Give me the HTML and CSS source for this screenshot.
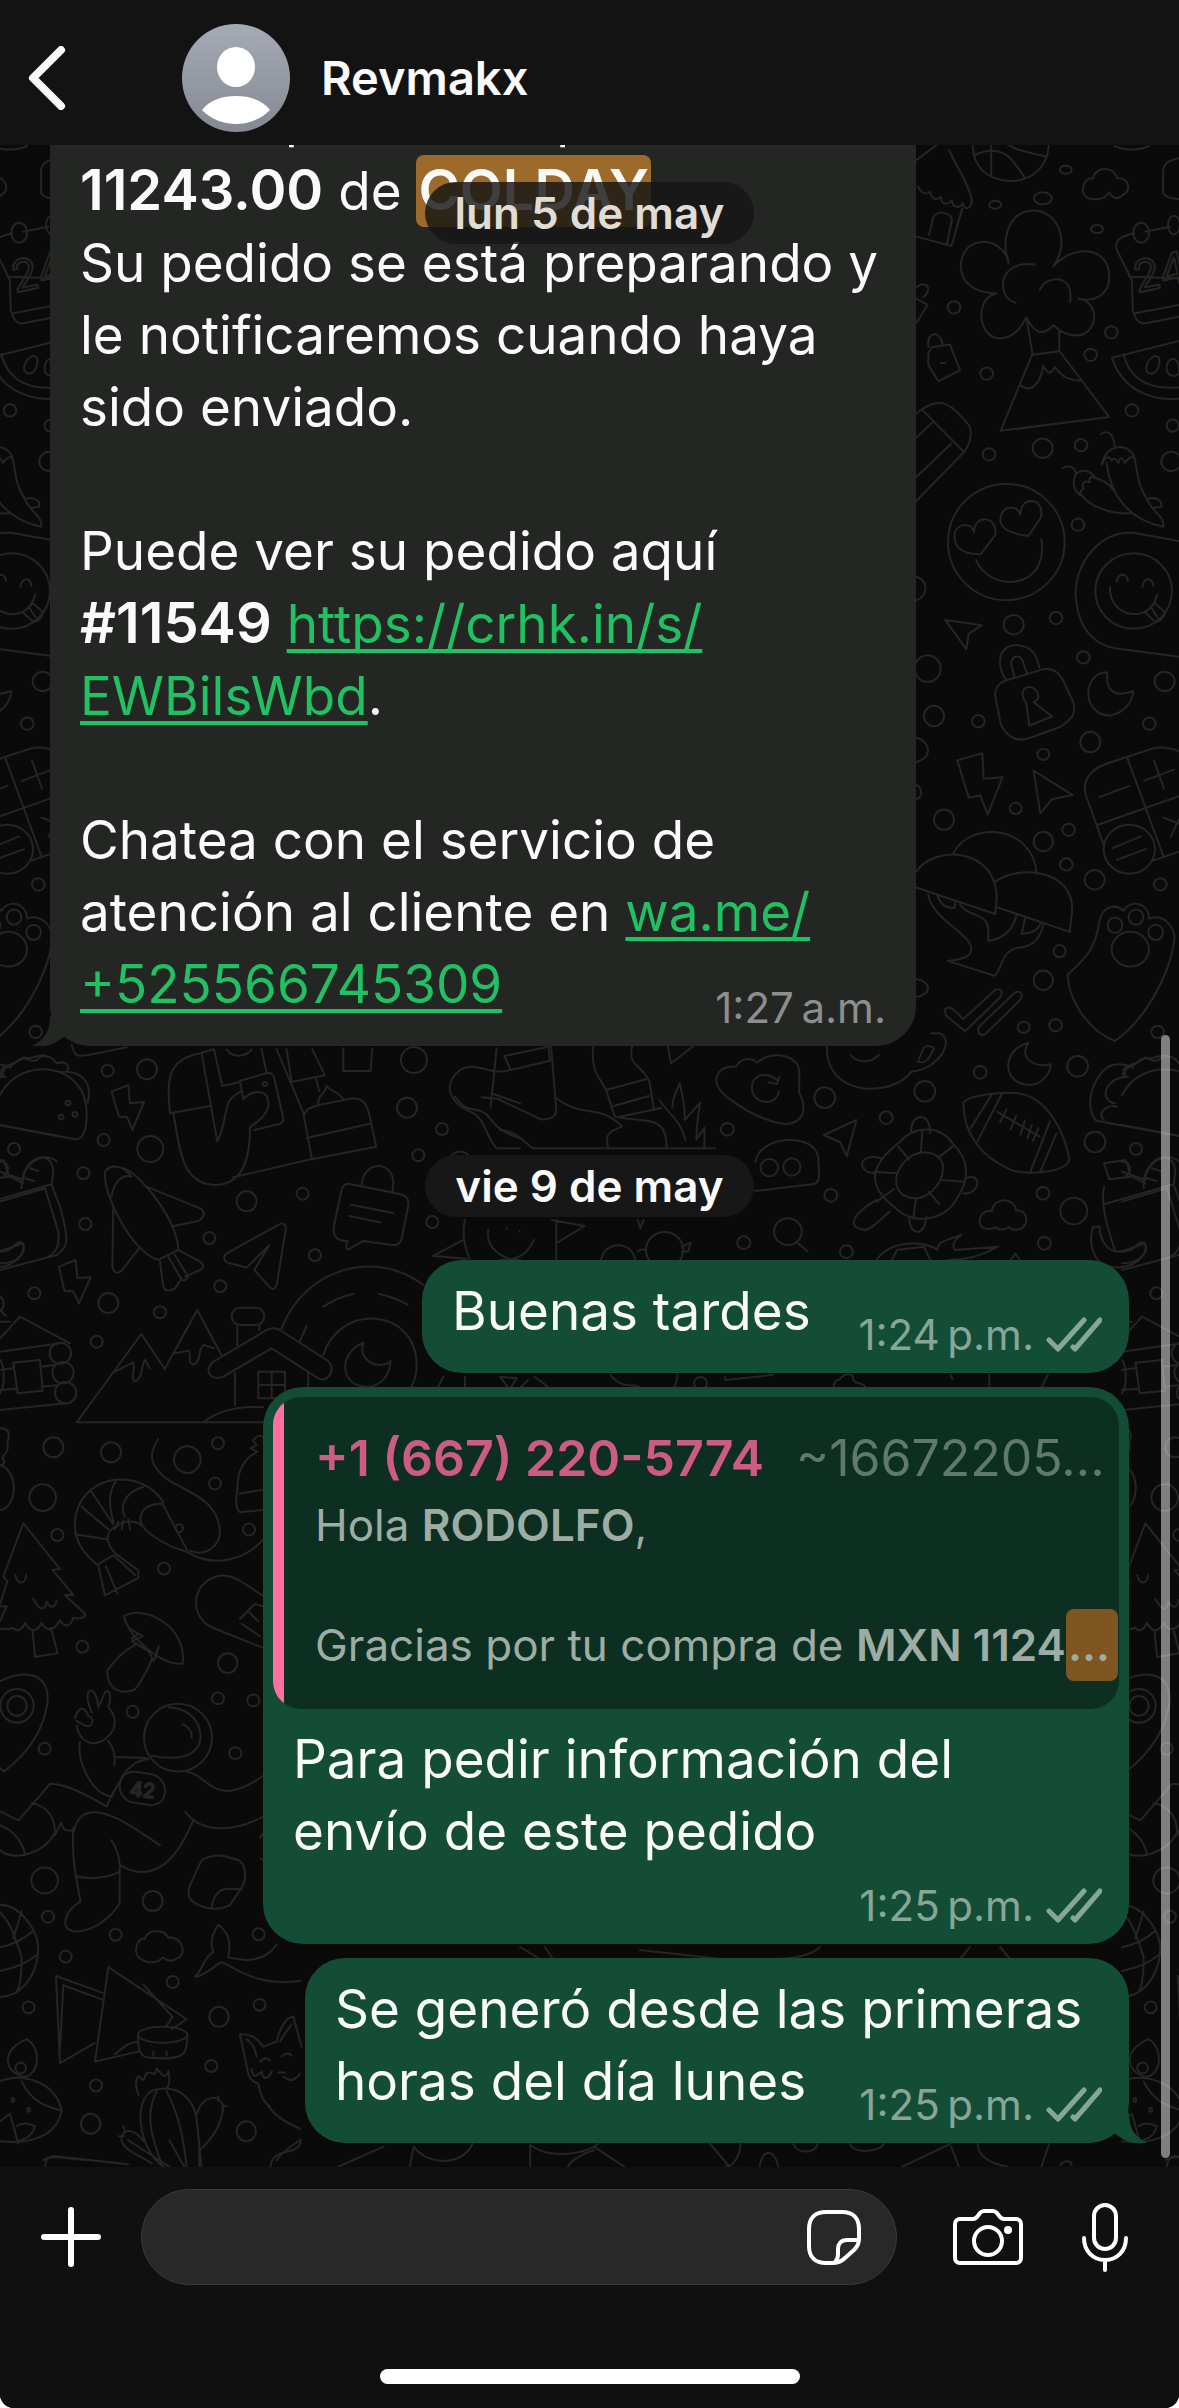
FILE: index.html
```html
<!DOCTYPE html>
<html lang="es">
<head>
<meta charset="utf-8">
<meta name="viewport" content="width=device-width, initial-scale=1">
<title>Revmakx</title>
<link rel="stylesheet" href="styles.css">
</head>
<body>
<div class="app">
  <header class="topbar">
    <button class="back" type="button" aria-label="Atrás">
      <svg width="38" height="64" viewBox="0 0 38 64" fill="none" stroke="#fafafa" stroke-width="8" stroke-linecap="round" stroke-linejoin="round"><path d="M33 4 5 32l28 28"/></svg>
    </button>
    <svg class="avatar" viewBox="0 0 108 108" aria-hidden="true">
      <defs><linearGradient id="sky" x1="0" y1="0" x2="0" y2="1"><stop offset="0" stop-color="#a5aab5"/><stop offset="1" stop-color="#848992"/></linearGradient></defs>
      <circle cx="54" cy="54" r="54" fill="url(#sky)"/>
      <ellipse cx="54" cy="43" rx="19" ry="20" fill="#fff"/>
      <path d="M20 86C28 76 40 72 54 72s26 4 34 14C79 95 67 100 54 100S29 95 20 86z" fill="#fff"/>
    </svg>
    <h1 class="name">Revmakx</h1>
  </header>

  <main class="chat">
    <svg class="wallpaper" viewBox="0 145 1179 2022" preserveAspectRatio="xMidYMin slice" aria-hidden="true">
      <defs>
        <g id="doodles">
          <!-- shop, basketball, cloud, calendar -->
          <g transform="translate(400 130) scale(.4968 .3333)">
            <path d="M1080 45 1040 90M1105 60c15 50 40 100 46 150 0 25-15 35-18 10-8 20-22 10-22-10-10 20-22 10-22-10-10 15-20 5-22-15-8 12-20 2-24-15M1132 235 1110 348 1040 320M1065 315l8-50c5-25 35-22 38 5l-10 70"/>
            <path d="M1153 45c0 60 25 105 75 108 50 0 76-50 78-108M1190 45v90M1156 75c60-40 80 20 100 65M1225 45c20 20 50 25 76 35"/>
            <circle cx="1340" cy="119" r="12"/><circle cx="1294" cy="205" r="18"/><circle cx="1198" cy="224" r="12"/><circle cx="1403" cy="297" r="12"/>
            <path d="M1385 205c-18-15-12-60 10-60 5-40 45-35 48 0 25-5 30 40 12 50-10 15-20 12-28-8-8 25-32 22-42 18z"/>
            <path d="M1438 48c20 14 50 14 70 0M1568 85c-20 5-32 15-32 40v60c0 15 15 20 32 22"/>
            <path d="M1500 305 1550 290M1478 310c-30 10-40 20-35 50l30 90 2 90c5 30 12 42 25 40l68-20M1480 550l88-25M1568 445l-100-5"/>
            <ellipse cx="1492" cy="308" rx="16" ry="30"/><ellipse cx="1558" cy="285" rx="12" ry="28"/>
          </g>
          <!-- tree, volcano, chillies, smileys, lock, mushrooms -->
          <g transform="translate(900 240) scale(.3333 .5102)">
            <path d="M326 46C300-5 330-58 400-58s115 58 60 110c60-45 168-40 168 20 0 40-55 50-92 43 65 5 60 70-5 72-30 0-45-5-70-20-30 20-55 20-82-15-20 25-50 45-90 40-60-10-60-80 0-87-70-2-105-20-107-55 5-60 115-60 144-10M347 123c-60-10-55-85 57-75M420 97c20-30 105-30 90 24M380 155l18 70 80-7v-40M398 222 302 374l326-27-148-128M362 285c20 10 55 10 68-38 18 20 22 15 35 2 25 25 55 25 77 27"/>
            <ellipse cx="162" cy="132" rx="19" ry="12"/><ellipse cx="260" cy="262" rx="19" ry="12"/><ellipse cx="634" cy="181" rx="19" ry="12"/><ellipse cx="572" cy="225" rx="19" ry="12"/><ellipse cx="696" cy="334" rx="19" ry="12"/><ellipse cx="543" cy="402" rx="19" ry="12"/><ellipse cx="818" cy="364" rx="18" ry="12"/><ellipse cx="267" cy="420" rx="19" ry="12"/><ellipse cx="428" cy="408" rx="30" ry="19"/><ellipse cx="814" cy="434" rx="30" ry="19"/><ellipse cx="534" cy="558" rx="19" ry="12"/>
            <path d="M85 222 95 210 150 205 180 255 115 277 85 245zM86 210c-10-30 35-35 42-5M122 241h14M50 92c30-15 50 5 20 20M50 115l33 12-33 35"/>
            <path d="M48 340c60-30 85-25 120-5l35 25c15 10 12 35-10 55L48 512M65 332l125 82M50 387l48-30M48 465l105-65"/>
            <path d="M837 198 636 231c30 60 110 85 201 80M670 224c20 50 80 70 167 65M738 250c10-25 45-32 40-8-5 25-40 25-40 8zM800 252c0-25 35-25 37-2v12c-15 8-35 5-37-10z"/>
            <path d="M604 380c20-8 38 0 40 25M605 440c15-40 75-45 98-15-15 0-20 5-28 12-10-15-15-10-20 0-10-10-15-10-20-5-10-12-20-5-30 8zM620 437c10 60 60 110 170 125 5-20-35-30-50-55-30-30-25-50-37-80M740 508c20-5 50 0 43 15l-22 2M488 447c15-5 35-5 40 10M527 460c20-15 45-5 57 3-20 0-15 10-15 12-20-5-25 5-18 12-12 5-12 15-10 13-20-10-25-25-14-40zM545 500c20 20 90 40 150 35M580 465c30 5 50 15 60 25"/>
            <ellipse cx="319" cy="592" rx="175" ry="114"/><path d="M222 573c0-35 70-35 64 5l-44 38c-70 0-80-20-78-40 5-20 50-25 58-3zM361 539c0-40 75-35 62 5l-38 36c-70-5-90-20-82-40 10-20 50-20 58-1zM228 627c40 65 220 60 196-40"/>
            <path d="M837 590 700 574c-100-5-175 60-173 120 5 70 60 105 140 108l170 15"/><ellipse cx="701" cy="688" rx="115" ry="74"/><path d="M630 680c-5 60 120 75 142 15M650 670c5-18 30-18 34-2M727 680c5-20 30-20 33-2M735 730l30-18 28 16c5 12-20 22-28 20zM755 722l18 18"/>
            <ellipse cx="341" cy="754" rx="30" ry="19"/><ellipse cx="468" cy="741" rx="19" ry="12"/><ellipse cx="550" cy="818" rx="19" ry="12"/><ellipse cx="794" cy="865" rx="30" ry="19"/><ellipse cx="83" cy="840" rx="39" ry="26"/><ellipse cx="102" cy="933" rx="30" ry="20"/><ellipse cx="235" cy="943" rx="19" ry="12"/><ellipse cx="571" cy="984" rx="30" ry="20"/><ellipse cx="748" cy="948" rx="19" ry="12"/><ellipse cx="430" cy="1008" rx="18" ry="11"/><ellipse cx="347" cy="1114" rx="18" ry="11"/><ellipse cx="132" cy="1136" rx="30" ry="20"/><ellipse cx="430" cy="1179" rx="29" ry="19"/><ellipse cx="506" cy="1156" rx="19" ry="12"/><ellipse cx="499" cy="1224" rx="19" ry="12"/><ellipse cx="584" cy="1254" rx="30" ry="19"/><ellipse cx="781" cy="1263" rx="19" ry="12"/><ellipse cx="479" cy="1394" rx="18" ry="12"/><ellipse cx="430" cy="1451" rx="29" ry="19"/><ellipse cx="371" cy="1543" rx="18" ry="11"/><ellipse cx="467" cy="1539" rx="19" ry="12"/><ellipse cx="773" cy="1552" rx="19" ry="12"/>
            <path d="M48 660c38 5 38 40 0 46M48 975c48 8 48 42 0 48M48 1068c20 5 20 25 0 28M48 1448c48 8 48 30 0 36"/>
            <path d="M136 745l110 10-40 17-7 30zM622 847c-75 0-80 85 10 85 40-5 65-25 68-48-40 10-85 10-78-37zM172 1020l75-14 4 50 57-3-45 73-22-37-35 4zM401 1040l117 48-62 8-35 28z"/>
            <path d="M318 862c-30-30-25-65 30-68 50 2 62 20 70 44M343 855l-10-25c5-20 30-15 35-5l13 25M285 890c5-20 20-25 50-30l90-18c40-5 55 10 65 22l32 45c5 25-10 30-40 45l-85 20c-50 15-80-5-95-25zM379 908c-30-30 10-40 30-25 15 15 0 20-8 23l55 28-68 18z"/>
            <path d="M837 1002c-40-10-70-8-90-3l-130 28c-50 12-70 35-60 60l55 100M683 1017l107 190M590 1147l247-57M598 1092l90-22M732 1060l90-22M762 1020l30 55M790 1132l47 12M837 1135l-25 35M757 1217l80-18M638 1192l85-23M650 1215l88-21"/><ellipse cx="688" cy="1194" rx="77" ry="48"/>
            <path d="M160 1202c50-65 240-55 250 40M48 1238c60-55 240-45 242 50l-4 33-238-52M286 1258c70-35 240-25 230 60l-7 38-217-48M85 1283c10 50 140 80 128 110-5 15-40 18-70 20l140 29c20-5 20-50 70-55 50 0 70-25 77-45M180 1302c20 25 85 15 85 50v22c50-5 75-25 84-50M112 1285c10 20 30 25 52 24l2-12M375 1330l-10 30c20 0 50-5 57-22"/>
            <path d="M503 1440c50-30 85-50 95-105 10-30 50-35 72-20 25-25 75-15 78 15 40-10 80 15 75 45-20 80-100 160-178 195-80-20-140-80-142-130z"/><ellipse cx="691" cy="1390" rx="56" ry="34"/><ellipse cx="645" cy="1343" rx="22" ry="15"/><ellipse cx="708" cy="1327" rx="22" ry="15"/><ellipse cx="767" cy="1357" rx="22" ry="15"/>
            <path d="M140 1505c10-3 15 0 50 22l95-57c20-5 25 5 15 15l-105 66-55-30c-8-10-8-12 0-16zM240 1540l105-65c20-5 25 5 15 15l-105 67c-20 5-25-10-15-17z"/>
          </g>
          <!-- dog, cloud, turtle, rugby ball, ghost, sunglasses -->
          <g transform="translate(500 1030) scale(.433 .3333)">
            <path d="M112 50 10 78l15 42 90-28zM118 50l12 190c0 20-15 30-35 28L0 210M130 205c60 60 100 15 152 85-35 15-40 30-32 65M0 300c40 5 50 30 75 55H497M215 50c-5 80 15 90 30 130l20 80c70 20 120-10 120 94M305 50c-10 60 20 50 40 105l10 80M245 180l92-32M262 228l82-30M272 262l100-28M368 210c20 40 50 60 60 120M398 232c0-30 10-50 17-72 8 40 12 80 12 110l35-52c-5 50-10 80-8 110l18-35v60M395 100 388 50M395 100l50-50"/>
            <path d="M545 110c10-25 35-30 48-12 35-40 105-25 98 40v50c20 50 10 90-30 95-60-10-105-50-135-80-50-50-20-100 19-93zM640 150c-30-30-60-10-58 25 2 50 55 55 62 10M645 140l-5 22-20-5M590 395c10-80 140-90 145-10 0 40 10 75-15 78l-130 20"/><ellipse cx="622" cy="413" rx="20" ry="26"/><ellipse cx="674" cy="411" rx="20" ry="26"/>
            <path d="M755 50c-5 150 150 155 195 75 70-10 100-100 65-115h-20M1003 55c-10-10-20-8-25 0l-13 40c10 5 20 0 25-10zM810 75c15 25 45 25 65 0"/>
            <ellipse cx="750" cy="203" rx="24" ry="31"/><ellipse cx="525" cy="298" rx="15" ry="19"/><ellipse cx="764" cy="496" rx="15" ry="19"/><ellipse cx="563" cy="638" rx="15" ry="19"/><ellipse cx="800" cy="665" rx="15" ry="19"/><ellipse cx="981" cy="184" rx="24" ry="31"/><ellipse cx="892" cy="263" rx="15" ry="19"/><ellipse cx="1109" cy="127" rx="15" ry="19"/><ellipse cx="1334" cy="109" rx="24" ry="31"/><ellipse cx="1254" cy="490" rx="15" ry="19"/><ellipse cx="1257" cy="640" rx="15" ry="19"/><ellipse cx="1374" cy="336" rx="24" ry="31"/><ellipse cx="1325" cy="543" rx="31" ry="40"/><ellipse cx="463" cy="1060" rx="15" ry="19"/>
            <path d="M748 315l75-45-22 108-16-42zM1220 38c-60 20-65 125 5 127 30-5 45-35 47-62-35 10-75-15-52-65zM1108 575c0-25 15-35 28-32 5-45 55-40 55-2 30 0 30 40 12 55-15 8-25 0-28-5-10 10-25 10-30 0-15 12-37 5-37-16z"/>
            <path d="M1070 220c10-25 90-35 125-30 70 10 110 120 120 200-10 40-100 45-135 30-70-40-110-110-110-200zM1135 195l-48 100M1160 190l-58 145M1270 275l-45 150M1285 310l-36 112M1148 245l98 75M1170 238l-15 38M1192 258l-13 40M1212 272l-10 42M1228 285l-10 40M1243 295l-12 38"/>
            <path d="M920 340c40-60 100-50 125 0 40 50 40 110 10 165-20 60-100 90-145 25-60-60-60-120 10-190zM955 375c30-20 70 0 68 40 0 50-40 100-75 88-45-10-45-90 7-128zM975 305l-3 65M1045 350l-30 30M920 350l25 40M865 425l52 5M1020 450l50 5M870 515l40-38M990 485l25 38M960 508l-5 58M950 310c-5-60 45-70 43 0M880 385c-50-20-60 40-15 45M870 510c-60 45-70 85-25 90 20-10 40-40 55-55M1075 445c40-20 35 50-5 45M945 565c0 50 35 60 40-5"/>
            <ellipse cx="665" cy="605" rx="32" ry="40"/><path d="M688 640l22 24M232 695c10-70 75-60 80-5M318 665c5-8 15-8 20-3M420 650l20-12-5 25-15 3"/><ellipse cx="380" cy="660" rx="43" ry="54"/>
            <path d="M120 570l75 18-60 48M0 690c20 0 60 0 78-60M130 570v125M15 595v2M45 603v2M870 690c30-60 110-60 140-30 0-30 30-30 55-45-20 20-20 30-15 45l100-10c-40 30-80 40-115 40M905 690l12-30 62-10 15 40M1180 690l10-20 10 20M318 570l6 25 8-25"/>
            <path d="M1462 112c-40-20-60-5-75 20-30 50-30 110-10 140l190 45M1440 140c-10-40 30-30 50-58 20 10 30-10 50-5M1420 220c-40-10-20-80 30-80M1395 270c-20-20 10-50 30-40M1395 400l50-10 12 50-50 8zM1395 470c-10 60 15 150 25 190M1397 522l160-60M1460 440l30 20M1490 450c0-50 50-90 78-55"/>
            <path d="M1385 590c0 40 20 90 60 70l45-20c10 60-70 100-110 50-15-30-20-60-10-100z"/>
            <path d="M520 1040v10l110-15M770 1075c0-30 15-20 20-35 10-10 20-10 25 0 0 30 25 10 30 35M1040 1035l5 12M1130 1035v40M1265 1035l-15 40M255 1035c30 50 60 20 70 40M410 1035c0 15-5 30-10 40M65 1050l-20 25M0 1040l20 35M80 1040l30 30"/>
          </g>
          <!-- taco, bolts, snowboard bag, shuttle, groceries, cottages -->
          <g transform="translate(0 1040) scale(.3333)">
            <path d="M0 165c60-120 265-100 260 60 0 40-10 75-35 73L0 255M10 105c-5-30 25-20 45-45 30-15 30 10 55 0 20-20 50-10 60 10 30-10 40 10 32 22M180 97c60-10 100 30 83 90M215 15c10 35 15 35 50 30L380 22"/>
            <circle cx="204" cy="189" r="7"/><circle cx="225" cy="223" r="7"/><circle cx="184" cy="231" r="7"/>
            <circle cx="323" cy="92" r="18"/><circle cx="441" cy="88" r="30"/><circle cx="311" cy="300" r="18"/><circle cx="42" cy="327" r="18"/><circle cx="451" cy="327" r="39"/><circle cx="250" cy="400" r="18"/><circle cx="256" cy="552" r="18"/><circle cx="628" cy="594" r="18"/><circle cx="740" cy="484" r="30"/><circle cx="908" cy="461" r="18"/><circle cx="945" cy="646" r="18"/><circle cx="661" cy="739" r="18"/><circle cx="103" cy="760" r="18"/><circle cx="325" cy="789" r="30"/><circle cx="480" cy="817" r="18"/><circle cx="290" cy="905" r="18"/><circle cx="1221" cy="203" r="30"/><circle cx="1242" cy="60" r="39"/><circle cx="1326" cy="267" r="18"/><circle cx="1255" cy="346" r="18"/><circle cx="1297" cy="546" r="18"/><circle cx="160" cy="1222" r="30"/><circle cx="333" cy="1237" r="30"/><circle cx="562" cy="1259" r="40"/><circle cx="654" cy="1210" r="18"/><circle cx="645" cy="1331" r="18"/><circle cx="747" cy="1469" r="18"/><circle cx="128" cy="1373" r="40"/><circle cx="172" cy="1485" r="18"/>
            <path d="M335 155l50-20 5 55 42-4-35 84-15-38-25-2zM177 680l50-20 5 54 40-2-35 78-17-36-27-2z"/>
            <path d="M510 220c-10-100-10-160 90-180L640 28M510 220l120-22M520 220c20 100 20 215 130 215 80-5 100-80 100-170M605 40l47 265c40-90 10-120 70-150M642 28l25 110 52-12M680 28c20 30 60 20 75 0M785 28l15 72-80 22 10 55c30-30 80-30 75 20-5 30-30 45-55 65M800 100c15-5 20 5 23 15l27 120c0 10-5 15-12 17l-75 18M830 28l80 190 26 140 193-38-22-100c-8-30-20-45-50-45l-100 20c-30 8-40 15-45 30M860 28l15 98 100-20-38-78M955 190c0-30 20-25 25-52 15 20 35 15 50 40M920 294l190-43M948 118l10 35M700 412l235-55"/>
            <circle cx="795" cy="132" r="6"/>
            <path d="M315 400c0-30 60-30 105 20 60 60 115 150 115 210l-60 30C400 640 310 470 315 400zM335 470c5-40 30-70 60-60M320 390c20-20 50-10 70 15M440 440l160 65c20 10 10 30-5 38l-75 15M340 500l-3 180c5 25 20 20 30 10l50-65M480 665l10 75c5 15 20 15 35 5l20-30M535 630l65 35c15 10 10 20 0 25l-45 20M505 650l40 70c10 5 20-5 18-12l-40-65"/>
            <path d="M680 640l155-85c15-10 25 0 22 15l-27 165c-5 15-15 15-22 5l-45-50 45-75-68 68-50-13c-20-5-22-20-10-30z"/>
            <path d="M1085 435c5-75 95-75 95-5l-3 28M1025 450c2-15 15-20 25-18l150 30c20 5 28 15 25 35l-20 100c-5 15-15 20-30 18l-85-12-45 25c-8 0-8-15-2-25-20 2-45-5-42-40l20-95zM1052 494l128 25M1048 528l92 19"/>
            <path d="M0 395l70 25M0 485l135-40M65 445c-5-90 90-130 95-50l-5 40 25 65c25 90 30 120-10 145L0 690M135 445l40 130c5 40-5 60-30 75M90 385l25 8M75 415l28 8M0 365c30 0 30 30 10 45M0 635c30 0 40-15 50-25 20-10 25 10 20 25-15 30-45 35-70 35"/>
            <path d="M0 895l60-65 150 80M0 935l180-25M0 1110l200-20M0 845h30M0 770c15 10 15 35 0 40l18 18M40 968l80-8 8 92-75 8zM0 990l38-5M120 980l45-5M0 1050l50-4M125 1040l45-4M0 960c15 20 15 80 0 100"/><circle cx="181" cy="940" r="32"/><circle cx="189" cy="998" r="32"/><circle cx="197" cy="1058" r="32"/>
            <path d="M790 1147H230L424 882l70 105 98-177 72 135M345 995l55-28c5 40-10 45 5 58 25-10 15-40 30-65l15 25M525 940l42-8c8 20-5 35 12 43 30-15 10-40 32-60l30 10M610 1147c50-40 110-50 180-45M705 1000v97M925 995v50M640 965l160-95c15-8 30-5 40 0l140 90c30 20 10 70-25 55L815 925 670 1010c-40 15-60-20-30-45zM775 995h80v80h-80zM815 995v80M775 1035h80M712 915v-58M778 870v-15"/><rect x="695" y="803" width="98" height="52" rx="26"/>
            <path d="M845 865c70-180 280-240 425-130M970 945c50-160 280-140 280 30 0 30-5 50-20 72M970 800c30-20 60-32 90-38M1138 762c35 8 60 18 85 32M920 858l-20 45M1090 908c-90 40-60 150 30 130 40-15 50-45 52-75-35 30-100 0-82-55M1330 1010l-18 37M1395 1010v37M1500 1010l50 5-20 32"/>
            <path d="M1530 90c-60 20-100-30-150 0-60 50-20 100 20 120 60 20 50 70 90 115h70M1365 170c40 60 70 20 105 65 30 40 60 50 90 60M1490 25l-18 175M1445 172l55 5M1475 160l85 30M1350 350c15-20 45-20 60 0M1395 540c-10 50 0 80 15 120M1390 600l-90 48 100 8M1465 570c-10 50 40 90 95 90M1030 25v68h82l5-68"/>
            <path d="M475 1197c-40 60-10 90 25 120 60 40 160 60 160 165-5 40-50 70-90 50M788 1190c-20-10-20 10-30 10l12 15-18 10 20 10c-60 30-60 90-60 120-5 20-5 60 10 62l65-7M790 1349l-70 12"/>
            <path d="M0 1165c30 0 30 20 22 45 5 30-10 30-15 45 10 10 5 20-7 20 60 20 50 130 0 135"/>
          </g>
          <!-- shrimp, pine, mushroom, astronaut, books, cactus, fox -->
          <g transform="translate(0 1380) scale(.3333 .4975)">
            <path d="M560 345c-60-10-150-45-138-70 5-20 30-25 65-27l75 95M490 245c-70-70-230-55-260 20-20 50 20 85 65 108l20 60 100-35v-15l-70-35c-20-15-30-30-15-45 60-35 95-10 95-10M225 310l95 10M245 255l80 45M275 225l65 65M350 200c-30 30-20 60-10 85M430 215c-60 10-70 45-55 60M295 370l45-18 65 40M318 375l35 55M345 300l10-15M365 300l5-18M390 300l-5-20"/><ellipse cx="538" cy="298" rx="11" ry="8"/><path d="M560 345c80 35 180 15 230-25"/>
            <path d="M70 288 10 395l12 10L0 450M70 288l110 92-22 2 62 50h-25l60 38c0 10-20 10-35 8-10 20-25 20-40 5-15 20-40 25-55 5-15 20-35 20-50 0-10 15-25 20-35 10-15 5-25 0-40 3M98 505l7 52 68-8-20-50M46 392c5 20 30 20 32 0M100 440c20 25 35 25 40 5 10 15 25 15 30-2M0 455h20l-20 30"/>
            <path d="M372 475c60-25 190 20 176 95-60 5-160-50-176-95zM395 520l20-10M410 530c-50 20-75 40-88 55 0 50 70 45 85 35 25-20 35-40 50-60M390 500l38 15-32 10 50 20 15 20 15-30-10 25"/>
            <path d="M788 433c-60-25-80-40-120-40-90 5-110 80-30 105l150 40M720 480l45-30 25 5M725 490l55 25M745 465l30 20"/>
            <ellipse cx="247" cy="536" rx="18" ry="12"/><ellipse cx="492" cy="379" rx="18" ry="12"/><ellipse cx="683" cy="569" rx="29" ry="20"/><ellipse cx="654" cy="640" rx="18" ry="12"/><ellipse cx="760" cy="644" rx="18" ry="12"/><ellipse cx="398" cy="667" rx="18" ry="12"/><ellipse cx="706" cy="750" rx="18" ry="12"/><ellipse cx="134" cy="741" rx="18" ry="12"/><ellipse cx="134" cy="1006" rx="40" ry="26"/><ellipse cx="458" cy="1047" rx="30" ry="20"/><ellipse cx="144" cy="1079" rx="18" ry="12"/><ellipse cx="347" cy="1115" rx="18" ry="12"/><ellipse cx="197" cy="1159" rx="18" ry="12"/><ellipse cx="518" cy="1210" rx="18" ry="12"/><ellipse cx="86" cy="1261" rx="18" ry="12"/><ellipse cx="657" cy="1280" rx="29" ry="20"/><ellipse cx="776" cy="1114" rx="18" ry="12"/><ellipse cx="779" cy="1256" rx="18" ry="12"/><ellipse cx="634" cy="1379" rx="18" ry="12"/><ellipse cx="288" cy="1418" rx="18" ry="12"/><ellipse cx="272" cy="1495" rx="29" ry="20"/><ellipse cx="739" cy="1510" rx="29" ry="20"/>
            <path d="M0 605c80-25 145-15 143 40-10 60-60 105-130 142L0 780"/><ellipse cx="51" cy="655" rx="29" ry="20"/><ellipse cx="51" cy="655" rx="50" ry="34"/>
            <ellipse cx="534" cy="719" rx="102" ry="68"/><path d="M455 755c70 10 145 5 147-40-5-40-50-55-95-57M548 692c20 5 28 15 27 27M345 758l95 2M445 762c-60 5-80 35-110 75-60-5-105-70-95-110M325 725c20 20 20 30 18 50M230 695c10 40 70 50 110 8 10-20 0-35-15-45 10-20 5-40-10-30l-20 30c-5-30-20-40-30-30-8 15 5 30 10 40M225 680c10-25 30-25 40-5 20 5 15 25-10 20l-25-10"/>
            <path d="M320 857C250 830 190 810 150 812l-45 35-50 38-55-18M320 857l20-30M0 895c40 10 70 35 75 60M95 850c60 10 70 40 70 60-30 40-120 60-165 35M165 915l18-25c10 20 20 15 38 15M220 910c10-30 30-45 80-40 70 10 120 40 180 65M220 900c-5 60 5 90 22 148-40 15-70 55-20 60 70 5 140-50 137-60V975c0-25-15-40-25-50M230 998c30 5 90 5 128-10M360 975c100 40 170-10 218-88M556 868c50 45 150 40 232 10M560 788c60 0 80 80 228 8M790 910l-10 10M790 965l-8-3"/>
            <rect x="359" y="790" width="136" height="62" rx="44" ry="30" transform="rotate(6 427 821)"/>
            <path d="M605 965c50-18 80-5 110 0 25 8 25 40 10 55l-35 35c-30 12-60 10-95 0-30-10-35-20-25-40zM635 1060c10-40 40-40 90-36"/>
            <path d="M425 1165c-30-10-15-45 10-42 10-20 55-20 70-2 40-5 60 35 25 42-25 10-30 0-42-2-15 12-45 12-63 4zM655 1095c40 20 35 45 30 65 50 10 110 10 145-25M655 1095c-20 20-25 40-15 55-30 10-30 35-55 50 40-5 60-25 80-30 40 10 100 50 235 38"/>
            <path d="M0 1055c60 0 115 50 115 90-5 60-60 95-115 95M0 1070c30 20 40 40 65 90 0 40-5 60-15 70M0 1140c40-5 70-15 98-32M0 1188c40-5 80-15 110-32M65 1068c-10 25-15 30-25 55"/>
            <path d="M168 1198l140 34M168 1198l12 175 104-40M325 1180l-40 190 130-20M325 1180l235 105-45 20M190 1215l-10 130M195 1218l115 28M430 1215l88 65-20 20M345 1355c20-10 40-25 70-25"/><ellipse cx="488" cy="1316" rx="74" ry="16"/><path d="M414 1320c0 25 5 40 30 42 50 3 80 3 100-5 15-5 18-20 18-40M460 1350v8M500 1350v8"/>
            <path d="M80 1325c50 20 35 80-15 75-60-15-55-55 15-75zM0 1410c60-20 170 0 185 60-20 60-120 65-185 60M65 1410c30 40 70 50 115 58M0 1490l30-15 25 60M50 1500c20-10 40-5 55 0-10 20-25 25-50 30"/><ellipse cx="62" cy="1383" rx="16" ry="11"/><circle cx="39" cy="1447" r="4"/><circle cx="86" cy="1467" r="4"/>
            <path d="M415 1437c-10-20-10-30 0-38 10 5 15 15 20 0 15-20 30 10 35-15 15 10 25 25 35 5 5 15 5 25-3 35M500 1585c-90-30-110-160-20-160 60-5 100 20 110 60l15 100M470 1430c-40 50-10 100 20 155M500 1430c30 40 50 80 60 155M590 1475c20-40 70-40 80-15-5 40-30 60-65 85M430 1530c-30-30-70-25-65 0 10 20 60 30 90 45M357 1520h14M370 1500l6 12M680 1460h-14M655 1440v10"/>
            <path d="M720 1315l25 80c5 15 20 15 30 20 10 30 20 40 35 45M720 1315c30 0 50 5 70 25l40-10c10-30 30-50 50-50l25 60M740 1325c20 10 25 20 30 35M840 1330c10-15 20-20 35-35M755 1385c5 25 20 10 30 5 5 20 20 15 30 0M780 1370c10-8 20-8 30-2M845 1360c10-8 20-8 30-2M835 1392h20M800 1455c30 30 70 40 100 50M850 1400c20 10 30 10 50-5M830 1568c20-20 50-30 70-40M130 1568c20-10 50-5 130 0"/>
          </g>
          <text class="doodle-text" x="130" y="1797" font-size="20" transform="rotate(6 142 1790)">42</text>
          <text class="doodle-text" x="1134" y="292" font-size="44" transform="rotate(-12 1140 280)">24</text>
          <!-- bottom edge -->
          <g transform="translate(0 2140) scale(.752 .3333)">
            <path d="M70 48l100 25M60 80c0-20 5-30 10-32M170 0l55 80M225 0l20 80M265 0v80M360 80c0-60 40-30 40-80M450 80l60-60M545 80l5-60c20 60 70 60 80-20M705 80V15c30 50 80 20 90-3M790 20l40 60M755 80c5-20 20-40 35-50M940 0l30 80M985 0c0 50-10 80-20 80M1010 80c5-60 20-50 25 0M1055 12c5 30 30 30 32 0M1130 12c5 30 40 25 45 0M1200 80l65-70M1265 20l10 60M1300 12c0 40 20 60 40 68M1395 12l-10 68M1410 75c5-15 15-15 15 0"/>
          </g>
          <path d="M520 1947l20 12M545 1947l8 12M640 1950l90 10M820 1947c-10 10-30 12-50 12M970 1947l-10 12M1000 1947l10 12"/>
        </g>
      </defs>
      <use href="#doodles"/>
      <use href="#doodles" x="-1122"/>
      <use href="#doodles" x="1122"/>
    </svg>

    <div class="thread">
      <article class="bubble bubble-in has-tail">
        <p class="text">Gracias por tu compra de <b>MXN</b><br><b>11243.00</b> de <mark><b>COLDAY</b></mark><br>Su pedido se está preparando y<br>le notificaremos cuando haya<br>sido enviado.<br><br>Puede ver su pedido aquí<br><b>#11549</b> <a href="#pedido">https://crhk.in/s/<br>EWBilsWbd</a>.<br><br>Chatea con el servicio de<br>atención al cliente en <a href="#chat">wa.me/<br>+525566745309</a></p>
        <div class="meta"><time>1:27&#8239;a.m.</time></div>
        <svg class="tail" viewBox="0 0 44 30" aria-hidden="true"><path d="M18 0C18 16 12 24 0 30c14 2 22-2 30-8l14-8V0z"/></svg>
      </article>

      <div class="day">vie 9 de may</div>

      <article class="bubble bubble-out one-line">
        <p class="text">Buenas tardes</p>
        <div class="meta"><time>1:24&#8239;p.m.</time><svg class="ticks" viewBox="0 0 56 36" aria-label="Entregado"><path d="M3 23l9 9L38 3M27 30l2 2L54 3"/></svg></div>
      </article>

      <article class="bubble bubble-out with-quote">
        <blockquote class="quote">
          <div class="quote-head"><span class="quote-phone">+1 (667) 220-5774</span><span class="quote-alias">~16672205...</span></div>
          <p class="quote-text">Hola <b>RODOLFO</b>,<br><br>Gracias por tu compra de <b>MXN 1124</b><mark><b>...</b></mark></p>
        </blockquote>
        <p class="text">Para pedir información del<br>envío de este pedido</p>
        <div class="meta meta-row"><time>1:25&#8239;p.m.</time><svg class="ticks" viewBox="0 0 56 36" aria-label="Entregado"><path d="M3 23l9 9L38 3M27 30l2 2L54 3"/></svg></div>
      </article>

      <article class="bubble bubble-out two-line has-tail">
        <p class="text">Se generó desde las primeras<br>horas del día lunes</p>
        <div class="meta"><time>1:25&#8239;p.m.</time><svg class="ticks" viewBox="0 0 56 36" aria-label="Entregado"><path d="M3 23l9 9L38 3M27 30l2 2L54 3"/></svg></div>
        <svg class="tail" viewBox="0 0 44 30" aria-hidden="true"><path d="M18 0C18 16 12 24 0 30c14 2 22-2 30-8l14-8V0z"/></svg>
      </article>
    </div>

    <div class="day day-floating">lun 5 de may</div>
    <div class="scroll-thumb"></div>
  </main>

  <footer class="composer">
    <form class="composer-row">
      <button class="icon-btn plus" type="button" aria-label="Adjuntar">
        <svg width="60" height="60" viewBox="0 0 60 60" fill="none" stroke="#fff" stroke-width="6" stroke-linecap="round"><path d="M30 3v54M3 30h54"/></svg>
      </button>
      <div class="field">
        <input type="text" aria-label="Mensaje">
        <button class="icon-btn sticker" type="button" aria-label="Stickers">
          <svg width="56" height="56" viewBox="0 0 56 56" fill="none" stroke="#fff" stroke-width="4" stroke-linejoin="round"><path d="M20 3h16c11 0 17 6 17 17v10c0 5-2 8-5 11l-9 8c-4 4-8 5-13 5h-6C9 54 3 48 3 37V20C3 9 9 3 20 3z"/><path d="M52 31H41c-6 0-9 4-9 9v5c0 4-1 6-3 8"/></svg>
        </button>
      </div>
      <button class="icon-btn camera" type="button" aria-label="Cámara">
        <svg width="70" height="56" viewBox="0 0 70 56" fill="none" stroke="#fff" stroke-width="4" stroke-linejoin="round"><path d="M7 10h13c2 0 3-1 4-2l3-4c1-1 2-2 4-2h9c2 0 3 1 4 2l3 4c1 1 2 2 4 2h12c3 0 5 2 5 5v34c0 3-2 5-5 5H7c-3 0-5-2-5-5V15c0-3 2-5 5-5z"/><circle cx="35" cy="32" r="14"/><circle cx="55" cy="21" r="4" fill="#fff" stroke="none"/></svg>
      </button>
      <button class="icon-btn mic" type="button" aria-label="Grabar audio">
        <svg width="48" height="70" viewBox="0 0 48 70" fill="none" stroke="#fff" stroke-width="4" stroke-linecap="round"><rect x="13" y="3" width="22" height="44" rx="11"/><path d="M3 36c0 13 9 22 21 22s21-9 21-22M24 58v10"/></svg>
      </button>
    </form>
    <div class="home-bar"></div>
  </footer>
</div>
</body>
</html>
```

FILE: styles.css
```css
* {
  box-sizing: border-box;
}

body {
  margin: 0;
  background: #fff;
  font-family: Inter, "Liberation Sans", sans-serif;
  color: #fafafa;
}

button {
  padding: 0;
  border: 0;
  background: none;
  cursor: pointer;
}

svg {
  display: block;
}

p {
  margin: 0;
}

b {
  font-weight: 600;
}

.app {
  display: flex;
  flex-direction: column;
  height: 100vh;
  border-radius: 0 0 14px 14px;
  overflow: hidden;
  background: #0a0a0a;
}

/* Header */
.topbar {
  display: flex;
  align-items: center;
  flex: none;
  padding: 24px 28px 13px;
  background: #131313;
}

.back {
  margin-right: 116px;
}

.avatar {
  width: 108px;
  height: 108px;
  margin-right: 31px;
}

.name {
  margin: 0;
  font-size: 47px;
  font-weight: 600;
  line-height: 60px;
}

/* Conversation */
.chat {
  position: relative;
  display: flex;
  flex-direction: column;
  justify-content: flex-end;
  flex: 1;
  min-height: 0;
  overflow: hidden;
}

.wallpaper {
  position: absolute;
  inset: 0;
  width: 100%;
  height: 100%;
  fill: none;
  stroke: #252525;
  stroke-width: 2px;
  stroke-linecap: round;
  stroke-linejoin: round;
}

.wallpaper * {
  vector-effect: non-scaling-stroke;
}

.doodle-text {
  font-weight: 400;
}

.thread {
  position: relative;
  display: flex;
  flex-direction: column;
  align-items: flex-end;
  gap: 14px;
  padding: 0 50px 24px;
}

.bubble {
  position: relative;
  display: grid;
  grid-template-columns: minmax(0, 1fr);
  max-width: 866px;
  padding: 15px 30px 26px;
  border-radius: 40px;
}

.bubble-in {
  align-self: flex-start;
  width: 100%;
  background: #242624;
  color: #fafafa;
}

.bubble-out {
  background: #134d36;
}

.one-line {
  width: 707px;
}

.two-line {
  width: 824px;
}

.with-quote {
  width: 100%;
  padding: 10px 10px 26px;
}

.text,
.meta {
  grid-area: 1 / 1;
}

.text {
  font-size: 53px;
  line-height: 72px;
  white-space: nowrap;
}

.text b {
  font-size: 56px;
}

.text a {
  color: #21c063;
  text-decoration: underline;
  text-decoration-thickness: 4px;
  text-underline-offset: 6px;
  text-decoration-skip-ink: none;
}

mark {
  color: inherit;
  border-radius: 8px;
}

.text mark {
  padding: 4px 2px;
  background: #9c6a2a;
}

.meta {
  display: flex;
  align-items: center;
  align-self: end;
  justify-self: end;
  gap: 12px;
  margin-bottom: -12px;
  font-size: 42px;
  line-height: 48px;
  color: #8d8e8d;
}

.bubble-out .meta {
  margin-right: -3px;
  color: #88a698;
}

.ticks {
  width: 56px;
  height: 36px;
  fill: none;
  stroke: currentColor;
  stroke-width: 5px;
  stroke-linecap: round;
  stroke-linejoin: round;
}

.tail {
  position: absolute;
  bottom: 0;
  left: -18px;
  width: 44px;
  height: 30px;
  fill: #242624;
}

.bubble-out .tail {
  left: auto;
  right: -18px;
  transform: scaleX(-1);
  fill: #134d36;
}

/* Quoted message */
.with-quote .text,
.with-quote .meta {
  grid-area: auto;
}

.with-quote .text {
  padding: 14px 20px 0;
}

.with-quote .meta {
  margin-top: 15px;
  margin-right: 17px;
}

.quote {
  margin: 0;
  padding: 24px 10px 34px 42px;
  border-radius: 28px;
  background: linear-gradient(to right, #ff6fa0 11px, #0c2f22 11px);
}

.quote-head {
  display: flex;
  gap: 32px;
  font-size: 50px;
  line-height: 74px;
  white-space: nowrap;
}

.quote-phone {
  font-weight: 600;
  color: #cc5c82;
}

.quote-alias {
  color: #61796d;
}

.quote-text {
  font-size: 44px;
  line-height: 60px;
  white-space: nowrap;
  color: #9dada5;
}

.quote-text mark {
  padding: 9px 8px 9px 2px;
  background: #7f5621;
}

/* Day separators */
.day {
  align-self: center;
  margin: 95px 0 29px;
  padding: 0 30px;
  border-radius: 31px;
  background: #171717;
  font-size: 44px;
  font-weight: 600;
  line-height: 62px;
  white-space: nowrap;
}

.day-floating {
  position: absolute;
  top: 37px;
  margin: 0;
  background: rgba(22, 22, 22, 0.82);
  color: #e0dcd6;
}

.scroll-thumb {
  position: absolute;
  top: 44%;
  right: 9px;
  bottom: 9px;
  width: 9px;
  border-radius: 5px;
  background: rgba(255, 255, 255, 0.48);
}

/* Composer */
.composer {
  flex: none;
  padding: 22px 0 24px;
  background: #101010;
}

.composer-row {
  display: flex;
  align-items: center;
  padding-right: 16px;
}

.icon-btn {
  display: flex;
  align-items: center;
  justify-content: center;
  flex: none;
}

.plus {
  width: 141px;
}

.field {
  display: flex;
  align-items: center;
  flex: 1;
  min-width: 0;
  height: 96px;
  padding: 0 34px 0 40px;
  border: 1px solid #3a3a3a;
  border-radius: 48px;
  background: #282828;
}

.field input {
  flex: 1;
  min-width: 0;
  border: 0;
  outline: 0;
  background: none;
  font: inherit;
  font-size: 48px;
  color: #fff;
}

.camera {
  width: 117px;
  margin-left: 32px;
}

.mic {
  width: 117px;
}

.home-bar {
  width: 420px;
  height: 15px;
  margin: 84px auto 0;
  border-radius: 8px;
  background: #fff;
}
```
